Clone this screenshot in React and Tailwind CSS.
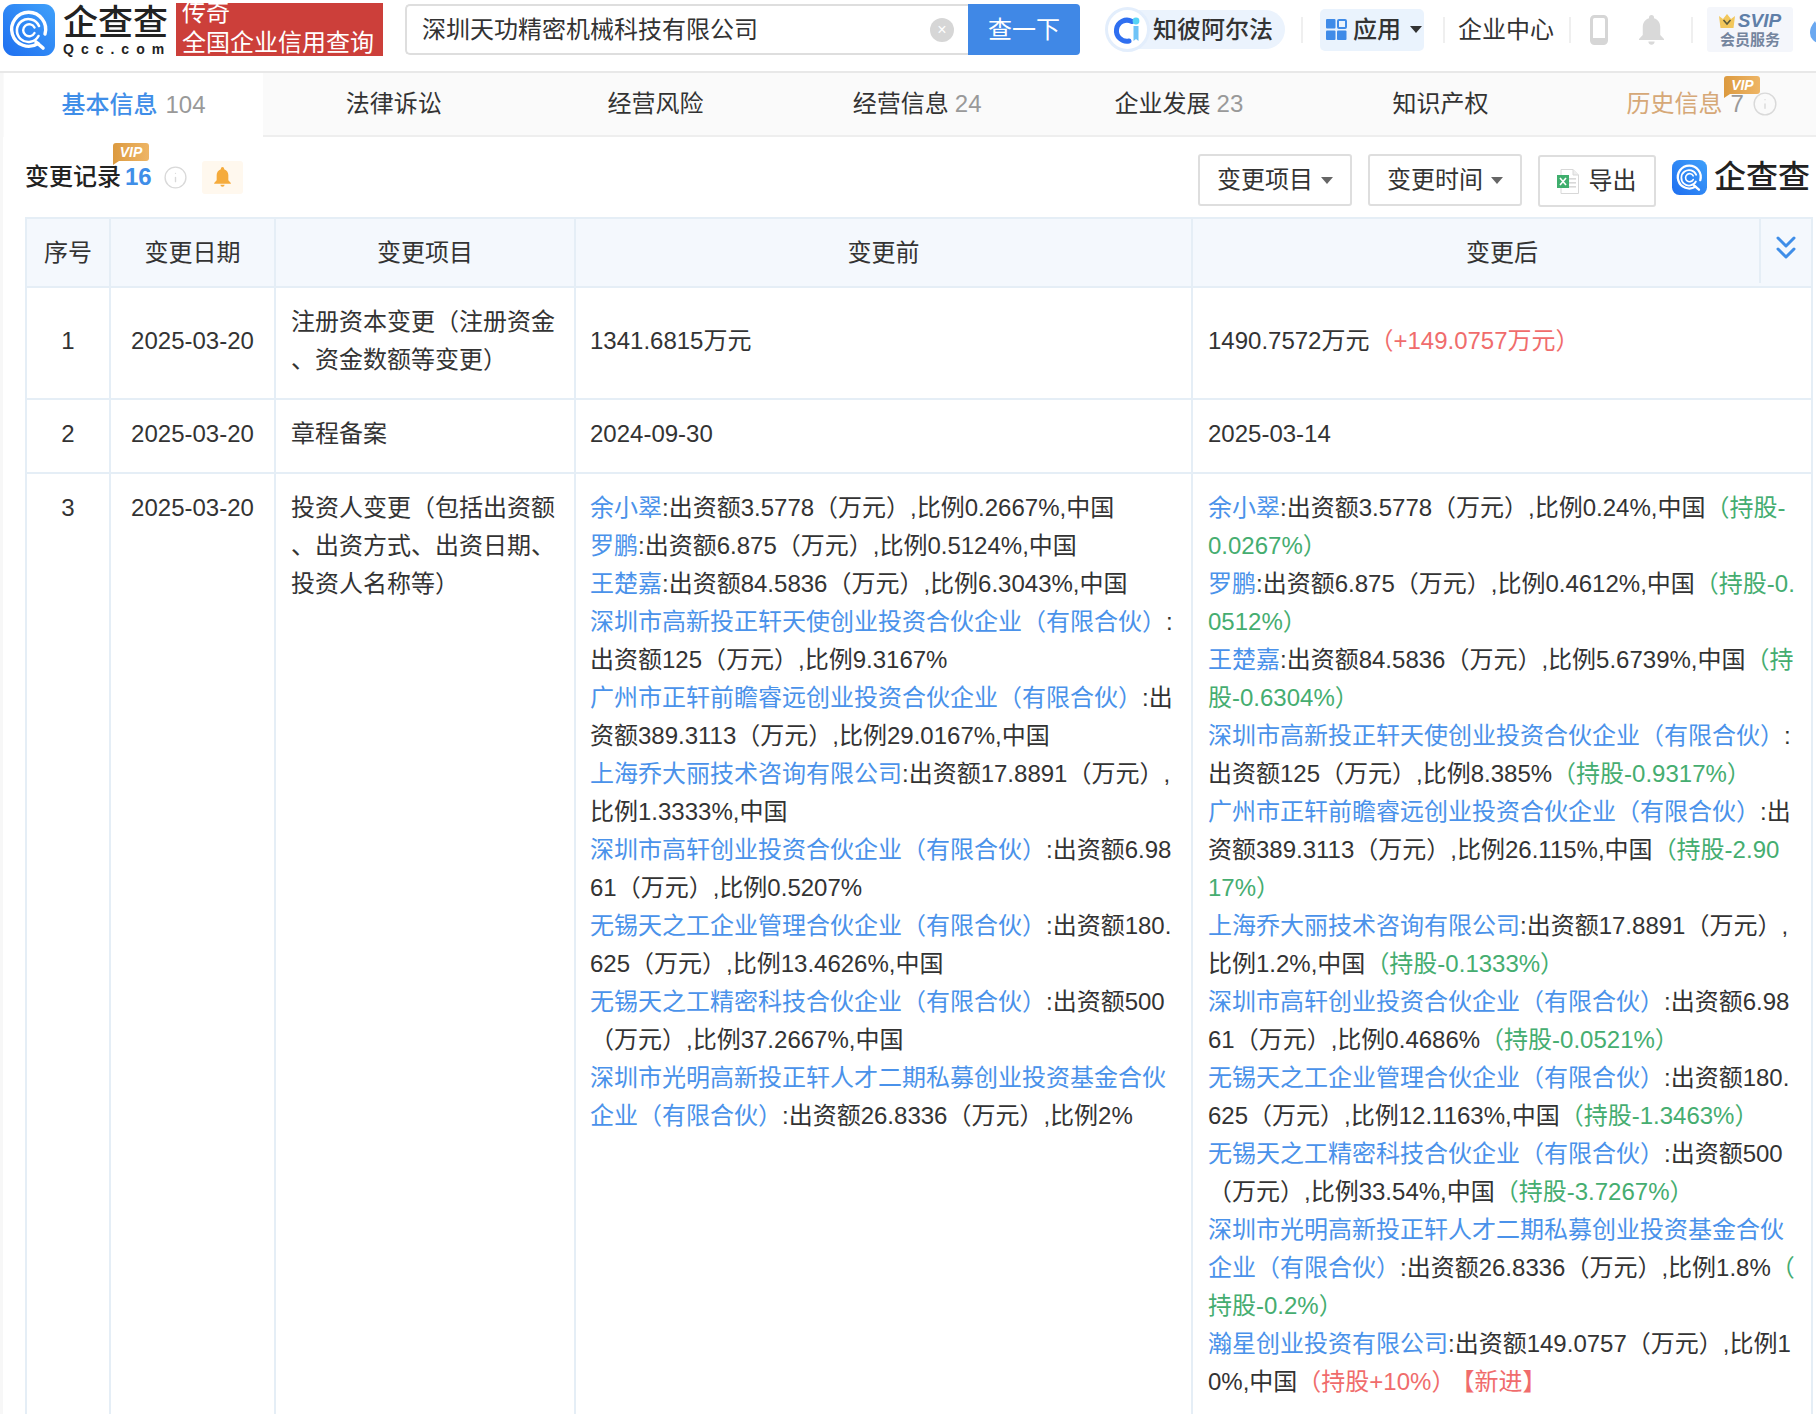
import React from "react";
import { Info } from "lucide-react";

const tabs = [
  { label: "法律诉讼" },
  { label: "经营风险" },
  { label: "经营信息", count: 24 },
  { label: "企业发展", count: 23 },
  { label: "知识产权" },
];

// l = link, r = red, g = green, n = "new" tag, anything else is plain text
const before = [
  [["l", "余小翠"], ["t", ":出资额3.5778（万元）,比例0.2667%,中国"]],
  [["l", "罗鹏"], ["t", ":出资额6.875（万元）,比例0.5124%,中国"]],
  [["l", "王楚嘉"], ["t", ":出资额84.5836（万元）,比例6.3043%,中国"]],
  [["l", "深圳市高新投正轩天使创业投资合伙企业（有限合伙）"], ["t", ":出资额125（万元）,比例9.3167%"]],
  [["l", "广州市正轩前瞻睿远创业投资合伙企业（有限合伙）"], ["t", ":出资额389.3113（万元）,比例29.0167%,中国"]],
  [["l", "上海乔大丽技术咨询有限公司"], ["t", ":出资额17.8891（万元）,比例1.3333%,中国"]],
  [["l", "深圳市高轩创业投资合伙企业（有限合伙）"], ["t", ":出资额6.9861（万元）,比例0.5207%"]],
  [["l", "无锡天之工企业管理合伙企业（有限合伙）"], ["t", ":出资额180.625（万元）,比例13.4626%,中国"]],
  [["l", "无锡天之工精密科技合伙企业（有限合伙）"], ["t", ":出资额500（万元）,比例37.2667%,中国"]],
  [["l", "深圳市光明高新投正轩人才二期私募创业投资基金合伙企业（有限合伙）"], ["t", ":出资额26.8336（万元）,比例2%"]],
];

const after = [
  [["l", "余小翠"], ["t", ":出资额3.5778（万元）,比例0.24%,中国"], ["g", "（持股-0.0267%）"]],
  [["l", "罗鹏"], ["t", ":出资额6.875（万元）,比例0.4612%,中国"], ["g", "（持股-0.0512%）"]],
  [["l", "王楚嘉"], ["t", ":出资额84.5836（万元）,比例5.6739%,中国"], ["g", "（持股-0.6304%）"]],
  [["l", "深圳市高新投正轩天使创业投资合伙企业（有限合伙）"], ["t", ":出资额125（万元）,比例8.385%"], ["g", "（持股-0.9317%）"]],
  [["l", "广州市正轩前瞻睿远创业投资合伙企业（有限合伙）"], ["t", ":出资额389.3113（万元）,比例26.115%,中国"], ["g", "（持股-2.90\n17%）"]],
  [["l", "上海乔大丽技术咨询有限公司"], ["t", ":出资额17.8891（万元）,比例1.2%,中国"], ["g", "（持股-0.1333%）"]],
  [["l", "深圳市高轩创业投资合伙企业（有限合伙）"], ["t", ":出资额6.9861（万元）,比例0.4686%"], ["g", "（持股-0.0521%）"]],
  [["l", "无锡天之工企业管理合伙企业（有限合伙）"], ["t", ":出资额180.625（万元）,比例12.1163%,中国"], ["g", "（持股-1.3463%）"]],
  [["l", "无锡天之工精密科技合伙企业（有限合伙）"], ["t", ":出资额500（万元）,比例33.54%,中国"], ["g", "（持股-3.7267%）"]],
  [["l", "深圳市光明高新投正轩人才二期私募创业投资基金合伙企业（有限合伙）"], ["t", ":出资额26.8336（万元）,比例1.8%"], ["g", "（持股-0.2%）"]],
  [["l", "瀚星创业投资有限公司"], ["t", ":出资额149.0757（万元）,比例10%,中国"], ["r", "（持股+10%）"], ["n", "【新进】"]],
];

function Investors({ rows }) {
  return (
    <div>
      {rows.map((row, i) => (
        <div key={i}>
          {row.map(([kind, text], j) => (
            <span
              key={j}
              className={
                kind === "l"
                  ? "text-[#4a92ea]"
                  : kind === "g"
                  ? "text-[#45ad70] whitespace-pre-line"
                  : kind === "r"
                  ? "text-[#f06c6c]"
                  : kind === "n"
                  ? "text-[#f06c6c] ml-[7px]"
                  : ""
              }
            >
              {text}
            </span>
          ))}
        </div>
      ))}
    </div>
  );
}

function LogoMark({ size, id }) {
  return (
    <svg width={size} height={size} viewBox="0 0 52 52" className="shrink-0">
      <defs>
        <linearGradient id={id} x1="0" y1="1" x2="1" y2="0">
          <stop offset="0" stopColor="#1f6ff0" />
          <stop offset="1" stopColor="#3fa0fa" />
        </linearGradient>
      </defs>
      <rect width="52" height="52" rx="11" fill={`url(#${id})`} />
      <path d="M35 39.5A17 17 0 1 1 42 30" fill="none" stroke="#fff" strokeWidth="3.4" strokeLinecap="round" />
      <path d="M33 38l7 6" stroke="#fff" strokeWidth="3.6" strokeLinecap="round" />
      <path d="M36 22A11.5 11.5 0 1 0 35.5 32" fill="none" stroke="#fff" strokeWidth="2.6" strokeLinecap="round" />
      <path d="M31.5 23.5A6 6 0 1 0 31.5 29" fill="none" stroke="#fff" strokeWidth="2.4" strokeLinecap="round" />
    </svg>
  );
}

function Caret({ color = "#666" }) {
  return (
    <svg width="12" height="7" viewBox="0 0 12 7" className="shrink-0">
      <path d="M0 0h12L6 7z" fill={color} />
    </svg>
  );
}

function Bell({ width, height, color }) {
  return (
    <svg width={width} height={height} viewBox="0 0 20 24" className="shrink-0">
      <path
        d="M10 0a2 2 0 0 0-2 2v.6C4.8 3.6 3 6.4 3 9.5V16l-3 3.2V20h20v-.8L17 16V9.5c0-3.1-1.8-5.9-5-6.9V2a2 2 0 0 0-2-2zM7.5 21.2a2.5 2.5 0 0 0 5 0z"
        fill={color}
      />
    </svg>
  );
}

function VipBadge() {
  return (
    <div className="relative w-[36px] h-[18px] rounded-[3px] rounded-bl-none bg-gradient-to-r from-[#dc9a3f] to-[#eeb565] flex items-center justify-center">
      <span className="text-white text-[14px] leading-none font-bold italic">VIP</span>
      <span className="absolute left-0 top-full w-0 h-0 border-t-[4px] border-t-[#dc9a3f] border-r-[6px] border-r-transparent" />
    </div>
  );
}

function Divider() {
  return <div className="w-[2px] h-[26px] bg-[#efefef] shrink-0" />;
}

function FilterButton({ label, className }) {
  return (
    <button className={`h-[52px] w-[154px] mt-[6px] border-2 border-[#dedede] rounded-[3px] flex items-center justify-center gap-[8px] text-[24px] text-[#333] ${className}`}>
      {label}
      <Caret />
    </button>
  );
}

const thClass = "border-2 border-[#e5eef6] font-normal text-[#333] text-center";
const tdClass = "border-2 border-[#e5eef6] px-[15px] pt-[15px] pb-[19px] leading-[38px]";
const beforeClass = "border-2 border-[#e5eef6] pl-[14px] pr-[15px] pt-[15px] pb-[19px] leading-[38px]";

export default function App() {
  return (
    <div className="w-[1816px] h-[1414px] overflow-hidden bg-white text-[24px] text-[#333] font-['Liberation_Sans','Noto_Sans_CJK_SC',sans-serif]">
      {/* top bar */}
      <header className="h-[73px] pb-[12px] pl-[3px] flex items-center border-b-2 border-[#e8e8e8] overflow-hidden">
        <LogoMark size={52} id="logoA" />
        <div className="ml-[8px] w-[104px] shrink-0">
          <div className="text-[35px] leading-[38px] font-medium text-[#222] whitespace-nowrap">企查查</div>
          <div className="text-[14px] leading-[14px] font-bold text-[#222] tracking-[7px] whitespace-nowrap">Qcc.com</div>
        </div>
        <div className="ml-[9px] w-[207px] h-[53px] shrink-0 bg-[#cc3f3a] overflow-hidden pl-[6px] text-white leading-[30px]">
          <div className="-mt-[5px]">传奇</div>
          <div className="whitespace-nowrap">全国企业信用查询</div>
        </div>

        <div className="ml-[22px] flex h-[51px] shrink-0">
          <div className="w-[563px] border-2 border-r-0 border-[#dedede] rounded-l-[5px] flex items-center pl-[15px] pr-[14px]">
            <span className="flex-1 whitespace-nowrap">深圳天功精密机械科技有限公司</span>
            <span className="w-[24px] h-[24px] rounded-full bg-[#d6d6d6] text-white text-[16px] leading-none flex items-center justify-center">×</span>
          </div>
          <button className="w-[112px] bg-[#4088e6] text-white rounded-r-[4px]">查一下</button>
        </div>

        <div className="ml-[26px] w-[179px] h-[39px] shrink-0 rounded-full bg-[#ebf3fd] flex items-center relative">
          <div className="absolute -left-[1px] -top-[3px] w-[45px] h-[45px] rounded-full bg-white border-[3px] border-[#e3eefc] flex items-center justify-center">
            <svg width="30" height="30" viewBox="0 0 30 30">
              <path d="M19 6.5A10.5 10.5 0 1 0 16 26" fill="none" stroke="#2f6ff0" strokeWidth="5" strokeLinecap="round" />
              <circle cx="23" cy="6" r="3.4" fill="#56d3f5" />
              <path d="M20.5 11h5v15l-2.5-2-2.5 2z" fill="#6fc3f7" />
            </svg>
          </div>
          <span className="ml-[47px] font-medium whitespace-nowrap">知彼阿尔法</span>
        </div>

        <div className="ml-[16px]"><Divider /></div>

        <div className="ml-[17px] w-[104px] h-[42px] shrink-0 bg-[#eaf3fd] rounded-[5px] flex items-center pl-[6px]">
          <svg width="21" height="21" viewBox="0 0 21 21" className="shrink-0">
            <rect x="0" y="0" width="9.5" height="9.5" rx="1" fill="#3f8be8" />
            <rect x="12" y="1" width="8" height="8" rx="1" fill="none" stroke="#3f8be8" strokeWidth="2" />
            <rect x="0" y="11.5" width="9.5" height="9.5" rx="1" fill="#3f8be8" />
            <rect x="11" y="11.5" width="9.5" height="9.5" rx="1" fill="#3f8be8" />
          </svg>
          <span className="ml-[6px] font-medium whitespace-nowrap">应用</span>
          <span className="ml-[9px]"><Caret color="#333" /></span>
        </div>

        <div className="ml-[19px]"><Divider /></div>
        <span className="ml-[13px] whitespace-nowrap w-[96px] shrink-0">企业中心</span>
        <div className="ml-[15px]"><Divider /></div>

        <svg width="18" height="30" viewBox="0 0 18 30" className="ml-[19px] shrink-0">
          <rect x="1.5" y="1.5" width="15" height="27" rx="3" fill="none" stroke="#d6d6d6" strokeWidth="3" />
          <rect x="2" y="23" width="14" height="5" fill="#d6d6d6" />
        </svg>
        <div className="ml-[31px]"><Bell width={25} height={30} color="#d9d9d9" /></div>
        <div className="ml-[27px]"><Divider /></div>

        <div className="ml-[14px] w-[86px] h-[45px] shrink-0 bg-[#f4f6fb] rounded-[3px] flex flex-col items-center justify-center">
          <div className="flex items-center gap-[3px]">
            <svg width="16" height="14" viewBox="0 0 16 14">
              <path d="M0 2l4 3 4-5 4 5 4-3-1.5 12h-13z" fill="#f2c75c" />
              <path d="M4.5 6l3.5 4 3.5-4" fill="none" stroke="#5a5a3a" strokeWidth="1.6" />
            </svg>
            <span className="text-[19px] leading-[20px] font-bold italic text-[#5f7fa8]">SVIP</span>
          </div>
          <span className="text-[15px] leading-[18px] font-bold text-[#74859e] whitespace-nowrap">会员服务</span>
        </div>

        <svg width="22" height="36" viewBox="0 0 22 36" className="ml-[16px] shrink-0">
          <path d="M12 0c2 6 9 11 9 21a10 10 0 0 1-20 0c0-6 3-9 5-12 1 3 2 4 3 4 1-4 1-9 3-13z" fill="#6aa8f0" />
        </svg>
      </header>

      <div className="border-l-[3px] border-[#f7f7f7]">
        {/* tabs */}
        <nav className="h-[64px] pl-[1px] flex bg-[#fafafa] overflow-hidden">
          <div className="w-[259px] shrink-0 bg-white flex items-center justify-center gap-[8px]">
            <span className="text-[#3f8ee8] font-medium">基本信息</span>
            <span className="text-[#999]">104</span>
          </div>
          {tabs.map((tab) => (
            <div key={tab.label} className="w-[261.7px] shrink-0 border-b-2 border-[#eeeeee] flex items-center justify-center gap-[6px] first-of-type:border-l-2">
              <span>{tab.label}</span>
              {tab.count && <span className="text-[#999]">{tab.count}</span>}
            </div>
          ))}
          <div className="w-[261.7px] shrink-0 border-b-2 border-[#eeeeee] flex items-center justify-center gap-[8px] relative">
            <span className="text-[#d6a877]">历史信息</span>
            <span className="text-[#999]">7</span>
            <Info size={26} strokeWidth={1.3} color="#d9d9d9" />
            <div className="absolute left-[153px] top-[3px]"><VipBadge /></div>
          </div>
        </nav>

        {/* section title and filters */}
        <div className="h-[80px] pl-[22px] pr-[6px] flex items-center">
          <div className="relative flex items-center">
            <span className="font-medium text-[#222]">变更记录</span>
            <span className="ml-[4px] text-[#3f8ee8] font-bold">16</span>
            <Info size={25} strokeWidth={1.3} color="#d9d9d9" className="ml-[11px]" />
            <div className="ml-[14px] w-[41px] h-[33px] rounded-[3px] bg-[#fff8ee] flex items-center justify-center">
              <Bell width={17} height={20} color="#f5ab3c" />
            </div>
            <div className="absolute left-[88px] -top-[16px]"><VipBadge /></div>
          </div>

          <FilterButton label="变更项目" className="ml-auto" />
          <FilterButton label="变更时间" className="ml-[16px]" />
          <button className="ml-[16px] mt-[8px] w-[118px] h-[52px] border-2 border-[#dedede] rounded-[3px] flex items-center justify-center gap-[9px]">
            <svg width="22" height="25" viewBox="0 0 22 25">
              <path d="M4 .5h12l5.5 5.5v18.5H4z" fill="#fff" stroke="#d8d8d8" />
              <path d="M16 .5V6h5.5" fill="#eee" stroke="#d8d8d8" />
              <rect x="12" y="9" width="7" height="1.6" fill="#d8d8d8" />
              <rect x="12" y="13" width="7" height="1.6" fill="#d8d8d8" />
              <rect x="12" y="17" width="7" height="1.6" fill="#d8d8d8" />
              <rect x="0" y="6" width="12" height="13" fill="#3fae6d" />
              <path d="M3 9l6 7M9 9l-6 7" stroke="#fff" strokeWidth="1.6" />
            </svg>
            导出
          </button>
          <div className="ml-[16px]"><LogoMark size={35} id="logoB" /></div>
          <span className="ml-[7px] text-[32px] leading-none font-medium text-[#222] whitespace-nowrap">企查查</span>
        </div>

        {/* change table */}
        <div className="pl-[22px] relative w-[1809px]">
          <table className="w-[1786px] table-fixed border-collapse">
            <colgroup>
              <col className="w-[84px]" />
              <col className="w-[165px]" />
              <col className="w-[300px]" />
              <col className="w-[617px]" />
              <col className="w-[620px]" />
            </colgroup>
            <thead>
              <tr className="h-[69px] bg-[#f4f8fd]">
                <th className={thClass}>序号</th>
                <th className={thClass}>变更日期</th>
                <th className={thClass}>变更项目</th>
                <th className={thClass}>变更前</th>
                <th className={thClass}>变更后</th>
              </tr>
            </thead>
            <tbody className="[line-break:anywhere] break-all">
              <tr>
                <td className={`${tdClass} text-center`}>1</td>
                <td className={`${tdClass} text-center`}>2025-03-20</td>
                <td className={tdClass}>注册资本变更（注册资金、资金数额等变更）</td>
                <td className={beforeClass}>1341.6815万元</td>
                <td className={tdClass}>
                  1490.7572万元<span className="text-[#f06c6c]">（+149.0757万元）</span>
                </td>
              </tr>
              <tr>
                <td className={`${tdClass} text-center`}>2</td>
                <td className={`${tdClass} text-center`}>2025-03-20</td>
                <td className={tdClass}>章程备案</td>
                <td className={beforeClass}>2024-09-30</td>
                <td className={tdClass}>2025-03-14</td>
              </tr>
              <tr>
                <td className={`${tdClass} text-center align-top`}>3</td>
                <td className={`${tdClass} text-center align-top`}>2025-03-20</td>
                <td className={`${tdClass} align-top`}>投资人变更（包括出资额、出资方式、出资日期、投资人名称等）</td>
                <td className={`${beforeClass} align-top`}><Investors rows={before} /></td>
                <td className={`${tdClass} align-top`}><Investors rows={after} /></td>
              </tr>
            </tbody>
          </table>
          <div className="absolute left-[1756px] top-[1px] w-[52px] h-[65px] pb-[6px] border-l-2 border-[#e5eef6] flex items-center justify-center">
            <svg width="20" height="24" viewBox="0 0 20 24">
              <path d="M2 2l8 8 8-8M2 13l8 8 8-8" fill="none" stroke="#3f8ee8" strokeWidth="3" strokeLinecap="round" strokeLinejoin="round" />
            </svg>
          </div>
        </div>
      </div>
    </div>
  );
}
